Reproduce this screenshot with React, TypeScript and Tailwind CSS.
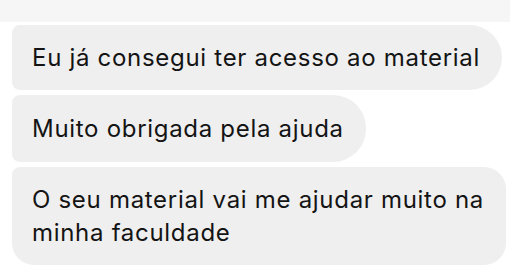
import React from "react";

export default function App() {
  return (
    <div
      className="w-[510px] h-[277px] bg-white overflow-hidden text-[#141414]"
      style={{ fontFamily: "Inter, 'Noto Sans', sans-serif" }}
    >
      <div className="h-[22px] bg-[#f6f6f6]" />
      <div className="flex flex-col items-start gap-[5px] pt-[3px] pl-[12px]">
        <div className="w-fit bg-[#efefef] rounded-l-[8px] rounded-r-[33px] pl-[20px] pr-[22px] py-[16px] text-[24px] leading-[33px] tracking-[0.7px]">
          Eu já consegui ter acesso ao material
        </div>
        <div className="w-fit bg-[#efefef] rounded-l-[8px] rounded-r-[33px] pl-[20px] pr-[22px] py-[17px] text-[24px] leading-[33px] tracking-[0.7px]">
          Muito obrigada pela ajuda
        </div>
        <div className="w-fit bg-[#efefef] rounded-tl-[8px] rounded-bl-[22px] rounded-r-[22px] pl-[20px] pr-[22px] py-[16px] text-[24px] leading-[33px] tracking-[0.7px]">
          O seu material vai me ajudar muito na
          <br />
          minha faculdade
        </div>
      </div>
    </div>
  );
}
